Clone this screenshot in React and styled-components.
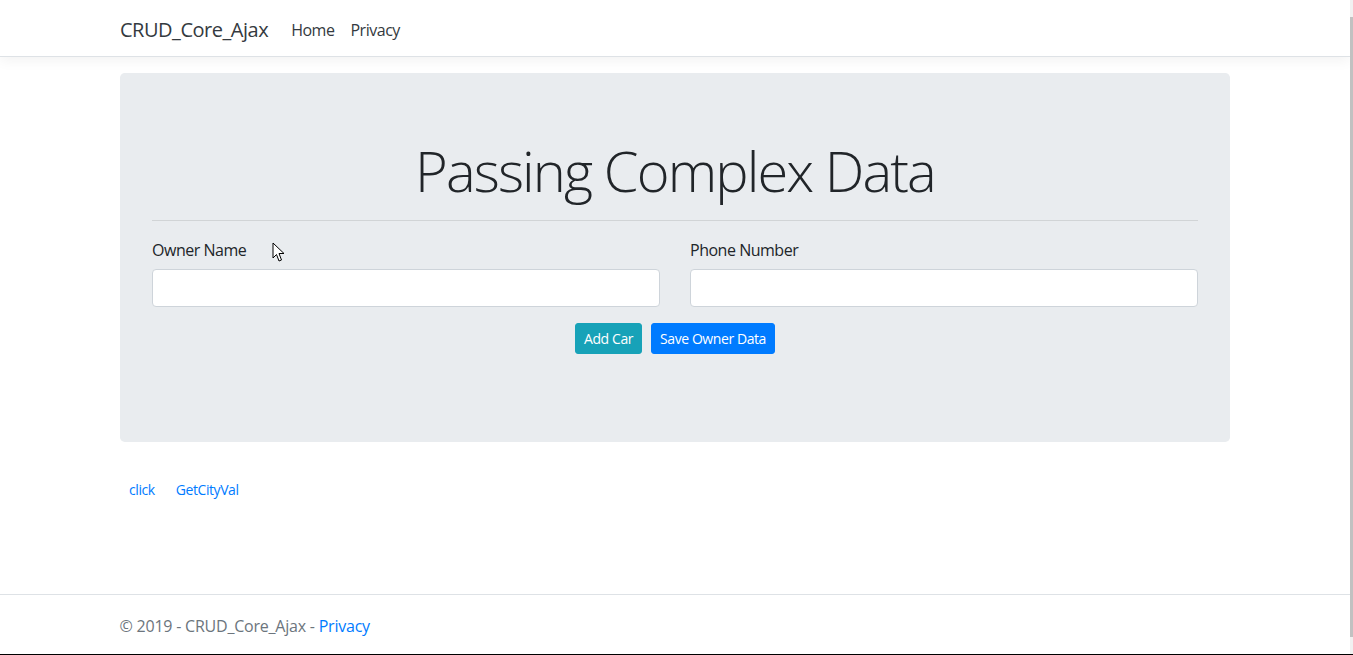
import React from 'react';
import styled, { createGlobalStyle } from 'styled-components';

const GlobalStyle = createGlobalStyle`
  html, body {
    margin: 0;
    padding: 0;
    height: 100%;
    overflow: hidden;
  }
  body {
    font-family: "Open Sans", "Noto Sans", "Liberation Sans", sans-serif;
    font-size: 16px;
    line-height: 1.5;
    letter-spacing: -0.48px;
    color: #212529;
    background: #fff;
  }
  * { box-sizing: border-box; }
`;

const Page = styled.div`
  display: flex;
  flex-direction: column;
  min-height: 655px;
  margin-right: 3px;
  position: relative;
`;

const Container = styled.div`
  width: 100%;
  max-width: 1140px;
  padding: 0 15px;
  margin: 0 auto;
`;

const NavBar = styled.header`
  background: #fff;
  border-bottom: 1px solid #dee2e6;
  box-shadow: 0 4px 12px rgba(0, 0, 0, 0.05);
  padding: 10px 0 6px;
  margin-bottom: 16px;
`;

const NavInner = styled(Container)`
  display: flex;
  align-items: center;
`;

const Brand = styled.a`
  font-size: 20px;
  line-height: 30px;
  padding: 5px 0;
  margin-right: 15px;
  color: #343a40;
  text-decoration: none;
`;

const NavLink = styled.a`
  padding: 8px;
  color: #343a40;
  text-decoration: none;
  font-size: 16px;
`;

const Main = styled.main`
  flex: 1;
`;

const Jumbotron = styled.section`
  background: #e9ecef;
  border-radius: 4.8px;
  padding: 64px 32px;
  margin-bottom: 32px;
`;

const Title = styled.h1`
  margin: 0 0 8px;
  text-align: center;
  font-size: 56px;
  font-weight: 300;
  line-height: 1.2;
  letter-spacing: -1.9px;
  color: #212529;
`;

const Rule = styled.hr`
  margin: 16px 0;
  border: 0;
  border-top: 1px solid rgba(0, 0, 0, 0.1);
`;

const FormRow = styled.div`
  display: grid;
  grid-template-columns: 1fr 1fr;
  column-gap: 30px;
`;

const FormGroup = styled.div`
  margin-bottom: 16px;
`;

const Label = styled.label`
  display: block;
  padding-top: 1px;
  margin-bottom: 7px;
  font-size: 16px;
  line-height: 24px;
  color: #212529;
`;

const Input = styled.input`
  display: block;
  width: 100%;
  height: 38px;
  padding: 6px 12px;
  font: inherit;
  border: 1px solid #ced4da;
  border-radius: 4px;
  background: #fff;
  outline: none;
`;

const Actions = styled.div`
  display: flex;
  justify-content: center;
  gap: 9px;
  margin-bottom: 24px;
`;

const Button = styled.button`
  font-family: inherit;
  font-size: 14px;
  line-height: 21px;
  letter-spacing: -0.42px;
  padding: 4px 8px;
  border-radius: 3px;
  border: 1px solid ${(p) => p.$bg};
  background: ${(p) => p.$bg};
  color: #fff;
  cursor: pointer;
`;

const LinkRow = styled.div`
  display: flex;
  gap: 3px;
`;

const LinkButton = styled.button`
  font-family: inherit;
  font-size: 14px;
  line-height: 21px;
  letter-spacing: -0.42px;
  padding: 4px 8px;
  border: 1px solid transparent;
  background: transparent;
  color: #007bff;
  cursor: pointer;
`;

const Footer = styled.footer`
  border-top: 1px solid #dee2e6;
  border-bottom: 1px solid #000;
  margin-right: -3px;
  padding-top: 3px;
  line-height: 56px;
  color: #6c757d;
  white-space: nowrap;
  font-size: 16px;
  letter-spacing: -0.22px;
`;

const FooterInner = styled(Container)`
  padding-left: 13px;
  padding-right: 18px;
`;

const FooterLink = styled.a`
  color: #007bff;
  text-decoration: none;
`;

const ScrollTrack = styled.div`
  position: fixed;
  top: 0;
  right: 0;
  bottom: 1px;
  width: 3px;
  background: #f1f1f1;
  display: flex;
  flex-direction: column;
  padding: 17px 0;
`;

const ScrollThumb = styled.div`
  flex: 1;
  background: #c1c1c1;
`;

const Cursor = styled.svg`
  position: absolute;
  left: 272px;
  top: 242px;
  width: 14px;
  height: 21px;
  pointer-events: none;
`;

export default function App() {
  return (
    <>
      <GlobalStyle />
      <Page>
        <NavBar>
          <NavInner>
            <Brand href="#">CRUD_Core_Ajax</Brand>
            <NavLink href="#">Home</NavLink>
            <NavLink href="#">Privacy</NavLink>
          </NavInner>
        </NavBar>
        <Main>
          <Container>
            <Jumbotron>
              <Title>Passing Complex Data</Title>
              <Rule />
              <FormRow>
                <FormGroup>
                  <Label>Owner Name</Label>
                  <Input type="text" />
                </FormGroup>
                <FormGroup>
                  <Label>Phone Number</Label>
                  <Input type="text" />
                </FormGroup>
              </FormRow>
              <Actions>
                <Button $bg="#17a2b8">Add Car</Button>
                <Button $bg="#007bff">Save Owner Data</Button>
              </Actions>
            </Jumbotron>
            <LinkRow>
              <LinkButton>click</LinkButton>
              <LinkButton>GetCityVal</LinkButton>
            </LinkRow>
          </Container>
        </Main>
        <Footer>
          <FooterInner>
            © 2019 - CRUD_Core_Ajax - <FooterLink href="#">Privacy</FooterLink>
          </FooterInner>
        </Footer>
        <Cursor viewBox="0 0 14 21">
          <path d="M1 1 L1 16 L4.5 12.5 L7 19 L9.5 18 L7 11.5 L12 11.5 Z" fill="#fff" stroke="#000" strokeWidth="1" strokeLinejoin="round" />
        </Cursor>
      </Page>
      <ScrollTrack>
        <ScrollThumb />
      </ScrollTrack>
    </>
  );
}
